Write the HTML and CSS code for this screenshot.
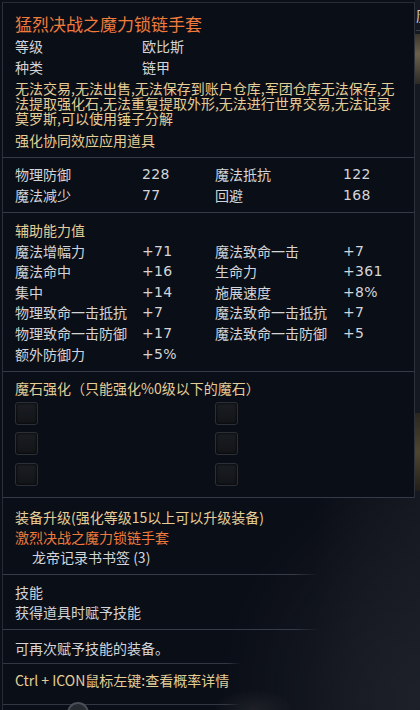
FILE: index.html
```html
<!DOCTYPE html>
<html lang="zh">
<head>
<meta charset="utf-8">
<title>猛烈决战之魔力锁链手套</title>
<link rel="stylesheet" href="styles.css">
</head>
<body>
<div class="screen">
  <div class="top">
    <div class="panel">
      <section class="sec sec-head">
        <div class="title">猛烈决战之魔力锁链手套</div>
        <div class="kv"><span>等级</span><span>欧比斯</span></div>
        <div class="kv"><span>种类</span><span>链甲</span></div>
        <p class="desc">无法交易,无法出售,无法保存到账户仓库,军团仓库无法保存,无<br>法提取强化石,无法重复提取外形,无法进行世界交易,无法记录<br>莫罗斯,可以使用锤子分解</p>
        <div class="note gold">强化协同效应应用道具</div>
      </section>

      <section class="sec sec-stats">
        <div class="grid4">
          <span>物理防御</span><span class="num">228</span><span>魔法抵抗</span><span class="num">122</span>
          <span>魔法减少</span><span class="num">77</span><span>回避</span><span class="num">168</span>
        </div>
      </section>

      <section class="sec sec-aux">
        <div class="grid4 aux">
          <span class="gold span4">辅助能力值</span>
          <span>魔法增幅力</span><span class="num">+71</span><span>魔法致命一击</span><span class="num">+7</span>
          <span>魔法命中</span><span class="num">+16</span><span>生命力</span><span class="num">+361</span>
          <span>集中</span><span class="num">+14</span><span>施展速度</span><span class="num">+8%</span>
          <span>物理致命一击抵抗</span><span class="num">+7</span><span>魔法致命一击抵抗</span><span class="num">+7</span>
          <span>物理致命一击防御</span><span class="num">+17</span><span>魔法致命一击防御</span><span class="num">+5</span>
          <span>额外防御力</span><span class="num">+5%</span>
        </div>
      </section>

      <section class="sec sec-stones">
        <div class="gold line">魔石强化（只能强化%0级以下的魔石）</div>
        <div class="slots">
          <span class="slot"></span><span class="slot"></span>
          <span class="slot"></span><span class="slot"></span>
          <span class="slot"></span><span class="slot"></span>
        </div>
      </section>
    </div>
    <div class="side">
      <span class="side-char">历</span>
      <span class="side-pic"></span>
      <span class="side-pic side-pic-low"></span>
    </div>
  </div>

  <div class="lower">
    <section class="lsec lsec-upgrade">
      <div class="line gold">装备升级(强化等级15以上可以升级装备)</div>
      <div class="line orange">激烈决战之魔力锁链手套</div>
      <div class="line indent">龙帝记录书书签 (3)</div>
    </section>
    <div class="rule rule-wide"></div>
    <section class="lsec lsec-skill">
      <div class="line">技能</div>
      <div class="line">获得道具时赋予技能</div>
    </section>
    <div class="rule rule-wide"></div>
    <section class="lsec lsec-again">
      <div class="line">可再次赋予技能的装备。</div>
    </section>
    <div class="rule rule-short"></div>
    <section class="lsec lsec-ctrl">
      <div class="line gold">Ctrl + ICON鼠标左键:查看概率详情</div>
    </section>
    <div class="rule rule-short"></div>
    <div class="bottom-icon"></div>
  </div>
</div>
</body>
</html>
```

FILE: styles.css
```css
* { box-sizing: border-box; }

html, body {
  margin: 0;
  padding: 0;
}

body {
  width: 420px;
  height: 710px;
  overflow: hidden;
  background: #0b0f18;
  font-family: "Noto Sans CJK SC", "Noto Sans", sans-serif;
  font-size: 14px;
  color: #d3d5d8;
}

.screen {
  display: flex;
  flex-direction: column;
  height: 710px;
}

.top {
  display: flex;
  align-items: stretch;
}

.panel {
  width: 413px;
  margin-left: 2px;
  margin-top: 2px;
  background: #0a0e17;
  border-top: 1px solid #272c36;
  border-left: 1px solid #2c313b;
  border-right: 1px solid #2c313b;
}

.sec {
  padding-left: 12px;
  border-bottom: 1px solid #353b46;
}

.gold { color: #e4cd96; }
.orange { color: #ee7a3c; }

.sec-head {
  padding-top: 9px;
  padding-bottom: 6px;
}

.title {
  font-size: 17px;
  line-height: 24px;
  color: #f07b3c;
}

.kv {
  display: grid;
  grid-template-columns: 127px 1fr;
  line-height: 21px;
}

.desc {
  margin: 3px 0 0;
  line-height: 15px;
  color: #e4cd96;
  white-space: nowrap;
}

.note {
  margin-top: 4px;
  line-height: 21px;
}

.grid4 {
  display: grid;
  grid-template-columns: 127px 73px 128px 1fr;
  line-height: 21px;
}

.num {
  font-family: "DejaVu Sans", sans-serif;
  font-size: 14px;
  letter-spacing: 0.3px;
}

.sec-stats {
  padding-top: 6px;
  padding-bottom: 6px;
}

.sec-aux {
  padding-top: 7px;
  padding-bottom: 6.8px;
}

.aux {
  line-height: 20.6px;
}

.span4 { grid-column: 1 / 5; }

.sec-stones {
  padding-top: 6px;
  padding-bottom: 11px;
}

.line {
  line-height: 21px;
}

.slots {
  margin-top: 3px;
  display: grid;
  grid-template-columns: 200px 23px;
  row-gap: 7.5px;
}

.slot {
  display: block;
  width: 23px;
  height: 23px;
  background: linear-gradient(180deg, #1a1d22, #121418);
  border: 1px solid #2c2f35;
  border-radius: 3px;
  box-shadow: inset 0 0 3px #000;
}

/* right side strip (other game UI) */
.side {
  flex: 1;
  background: #151922;
  display: flex;
  flex-direction: column;
  overflow: hidden;
}

.side-char {
  font-size: 14px;
  line-height: 30px;
  color: #cfcfcf;
  margin-left: 1px;
  border-bottom: 1px solid #3a3f48;
  white-space: nowrap;
}

.side-pic {
  display: block;
  height: 50px;
  margin-top: 3px;
  background: linear-gradient(180deg, #3a352c, #6a604c 40%, #2c2a27);
}

.side-pic-low {
  margin-top: 329px;
  height: 78px;
  background: linear-gradient(180deg, #2a2720, #4e4530 50%, #221f1a);
}

/* lower sections */
.lower {
  flex: 1;
  margin-left: 2px;
  border-left: 1px solid #262b35;
  background:
    radial-gradient(ellipse 40px 20px at 250px 212px, rgba(150,150,130,0.12), transparent),
    radial-gradient(ellipse 200px 220px at 420px 200px, #1d2028, rgba(29,32,40,0)),
    linear-gradient(90deg, #0a0e17 0, #0a0e17 310px, #10131b 360px, #151820 418px);
  position: relative;
  overflow: hidden;
}

.lsec {
  padding-left: 12px;
  line-height: 20px;
}

.lsec .line { line-height: 20px; }

.lsec-upgrade { padding-top: 9px; padding-bottom: 7px; }
.lsec-skill { padding-top: 7px; padding-bottom: 7px; }
.lsec-again { padding-top: 8px; padding-bottom: 5px; }
.lsec-ctrl { padding-top: 6px; padding-bottom: 14px; }

.indent { padding-left: 17px; }

.rule {
  height: 1px;
}

.rule-wide {
  width: 316px;
  background: linear-gradient(90deg, #363c47 0, #363c47 92%, rgba(54,60,71,0));
}

.rule-short {
  width: 238px;
  background: linear-gradient(90deg, #323843 0, #323843 94%, rgba(50,56,71,0));
}

.bottom-icon {
  position: absolute;
  left: 64px;
  bottom: -14px;
  width: 22px;
  height: 22px;
  border-radius: 50%;
  border: 2px solid #4a4f58;
  background: #262a31;
}
```
